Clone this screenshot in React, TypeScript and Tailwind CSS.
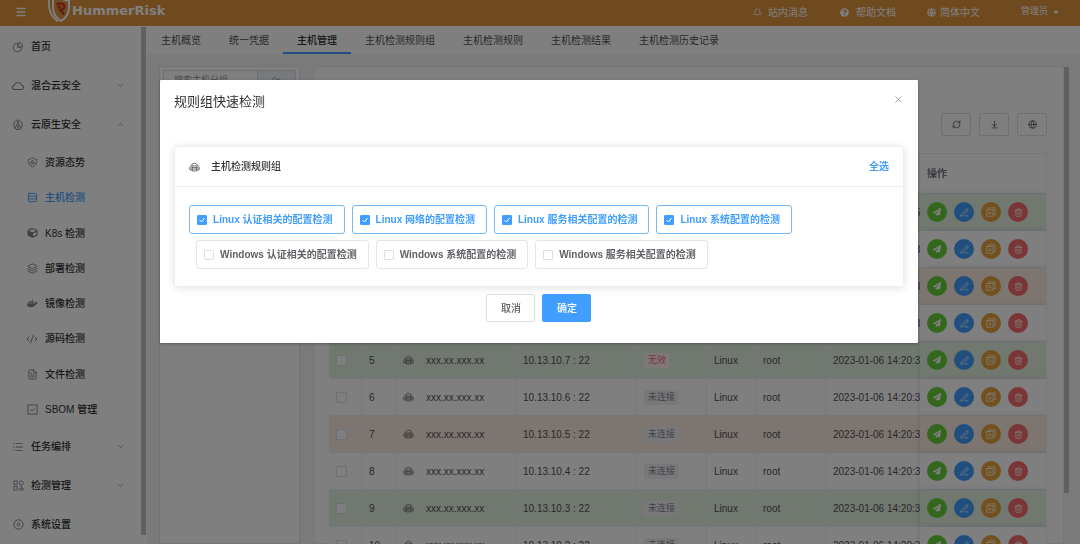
import React from "react";
import { AiOutlinePieChart, AiOutlineCloud, AiOutlineUnorderedList } from "react-icons/ai";
import {
  ChevronDown, ChevronUp, Rows3, Layers, CodeXml, FileText, Menu, Bell,
  Globe, X, ArrowDownToLine, RefreshCw, Trash2, PenLine, Folder,
} from "lucide-react";
import { FaDocker, FaPaperPlane, FaCube, FaGlobe, FaQuestionCircle } from "react-icons/fa";

type MenuItem = { label: string; icon: React.ReactNode; arrow?: "up" | "down"; children?: MenuItem[]; active?: boolean };

const small = "h-[11px] w-[11px]";

const menu: MenuItem[] = [
  { label: "首页", icon: <AiOutlinePieChart className="h-3 w-3" /> },
  { label: "混合云安全", icon: <AiOutlineCloud className="h-[14px] w-[14px] shrink-0" />, arrow: "down" },
  {
    label: "云原生安全",
    icon: <NativeIcon />,
    arrow: "up",
    children: [
      { label: "资源态势", icon: <ShieldIcon /> },
      { label: "主机检测", icon: <Rows3 className={small} strokeWidth={2} />, active: true },
      { label: "K8s 检测", icon: <FaCube className="h-[10px] w-[11px]" /> },
      { label: "部署检测", icon: <Layers className={small} strokeWidth={2} /> },
      { label: "镜像检测", icon: <FaDocker className={small} /> },
      { label: "源码检测", icon: <CodeXml className="h-3 w-3" strokeWidth={2} /> },
      { label: "文件检测", icon: <FileText className={small} strokeWidth={2} /> },
      { label: "SBOM 管理", icon: <CheckSquareIcon /> },
    ],
  },
  { label: "任务编排", icon: <AiOutlineUnorderedList className="h-3 w-3" />, arrow: "down" },
  { label: "检测管理", icon: <GridIcon />, arrow: "down" },
  { label: "系统设置", icon: <GearIcon /> },
];

const tabs = ["主机概览", "统一凭据", "主机管理", "主机检测规则组", "主机检测规则", "主机检测结果", "主机检测历史记录"];

const rowTones = ["bg-[#e3f1de]", "bg-white", "bg-[#faeadf]", "bg-white"];

const hosts = Array.from({ length: 10 }, (_, i) => ({
  index: i + 1,
  name: "xxx.xx.xxx.xx",
  address: `10.13.10.${i === 9 ? 2 : 12 - (i + 1)} : 22`,
  valid: i !== 4,
  time: i === 0 ? "2023-01-06 14:20:56" : "2023-01-06 14:20:36",
  tone: rowTones[i % 4],
}));

const groups = [
  { label: "Linux 认证相关的配置检测", checked: true },
  { label: "Linux 网络的配置检测", checked: true },
  { label: "Linux 服务相关配置的检测", checked: true },
  { label: "Linux 系统配置的检测", checked: true },
  { label: "Windows 认证相关的配置检测", checked: false },
  { label: "Windows 系统配置的检测", checked: false },
  { label: "Windows 服务相关配置的检测", checked: false },
];

function NativeIcon() {
  return (
    <svg viewBox="0 0 24 24" className="h-3 w-3" fill="none" stroke="currentColor" strokeWidth="1.8">
      <path d="M9 3.500L4 6.500v11l4 2.500M15 3.500l5 3v11l-4 2.500" />
      <circle cx="12" cy="3.500" r="2" />
      <path d="M12 6.500L6.500 18M12 6.500L17.500 18M9 14h6M12 14v8M8 21h8" />
    </svg>
  );
}

function ShieldIcon() {
  return (
    <svg viewBox="0 0 24 24" className={small} fill="none" stroke="currentColor" strokeWidth="1.8">
      <path d="M12 2c3 2 6 3 9.500 3 0 8-2.500 14-9.500 17C5 19 2.500 13 2.500 5 6 5 9 4 12 2z" />
      <path d="M6 14l6-7 6 7M9 12.500h6M8 17l4-3 4 3" />
    </svg>
  );
}

function CheckSquareIcon() {
  return (
    <svg viewBox="0 0 24 24" className={small} fill="none" stroke="currentColor" strokeWidth="2">
      <rect x="2" y="2" width="20" height="20" />
      <path d="M7 12l4 3 6-6" />
    </svg>
  );
}

function GridIcon() {
  return (
    <svg viewBox="0 0 24 24" className={small} fill="none" stroke="currentColor" strokeWidth="1.8">
      <rect x="2" y="2" width="7" height="8" />
      <rect x="2" y="14" width="7" height="8" />
      <path d="M14 22v-4h8v4z" />
      <circle cx="18" cy="6.500" r="4.500" />
      <path d="M18 11v7" />
    </svg>
  );
}

function GearIcon() {
  return (
    <svg viewBox="0 0 24 24" className={small} fill="none" stroke="currentColor" strokeWidth="2">
      <path d="M9 2h6l5 3.500 2.500 6.500-2.500 6.500L15 22H9l-5-3.500L1.500 12 4 5.500z" />
      <circle cx="12" cy="12" r="3" />
    </svg>
  );
}

function CopyIcon() {
  return (
    <svg viewBox="0 0 24 24" className="h-[10px] w-[10px]" fill="none" stroke="currentColor" strokeWidth="1.8">
      <rect x="2" y="6" width="15" height="16" />
      <path d="M6 6V2h16v16h-5M6 12h7M6 16h7" />
    </svg>
  );
}

function HostIcon() {
  return (
    <svg viewBox="0 0 24 20" className="h-[10px] w-[11px] shrink-0" fill="none" stroke="currentColor" strokeWidth="1.500">
      <path d="M5 17.500C2.500 17 1 15.500 1 13c0-2.500 1.500-4 3.500-4.500C5 4.500 8 2 12 2s7 2.500 7.500 6.500C21.500 9 23 10.500 23 13c0 2.500-1.500 4-4 4.500" />
      <path d="M7 7.500h10v11H7zM7 11h10M7 14.500h10M5 10.500c-1 2-.5 4 0 6M19 10.500c1 2 .5 4 0 6" />
    </svg>
  );
}

function Logo() {
  return (
    <svg viewBox="0 0 24 26" className="h-[26px] w-6 shrink-0" fill="none">
      <path d="M5 0v8c0 7 3 11 8 14 5-3 8-7 8-14V1.500c-3 0-5-.5-8-2.500" stroke="#fff" strokeWidth="2" />
      <path d="M1 1c-.5 9 1 16 9 21.500" stroke="#fff" strokeWidth="1.800" />
      <path d="M8.500 5.500C10 4 16.500 3.800 16.500 7.200c0 2.300-2 3.300-4.500 3.300L16 15.500M9.500 8.500c1.500-1 2.500-1 3.500-.5" stroke="#c8322a" strokeWidth="2.200" />
    </svg>
  );
}

function MenuRow({ item, child }: { item: MenuItem; child?: boolean }) {
  return (
    <a
      href="#"
      className={`flex shrink-0 items-center text-[10px] font-medium ${child ? "h-[35px] pl-[26px]" : "h-[39px] pl-3"} ${
        item.active ? "text-[#409eff]" : "text-[#303133]"
      }`}
    >
      <span className={`flex w-3 justify-center ${item.active ? "" : "text-[#808388]"}`}>{item.icon}</span>
      <span className="ml-[7px]">{item.label}</span>
      {item.arrow && (
        <span className="mr-4 ml-auto text-[#909399]">
          {item.arrow === "up" ? <ChevronUp className="h-[9px] w-[9px]" /> : <ChevronDown className="h-[9px] w-[9px]" />}
        </span>
      )}
    </a>
  );
}

function Sidebar() {
  return (
    <aside className="flex w-[147px] shrink-0 overflow-hidden bg-white">
      <nav className="flex-1 pt-px">
        {menu.map((item) => (
          <React.Fragment key={item.label}>
            <MenuRow item={item} />
            {item.children && (
              <div className="flex h-[283px] flex-col justify-between pt-px">
                {item.children.map((c) => (
                  <MenuRow key={c.label} item={c} child />
                ))}
              </div>
            )}
          </React.Fragment>
        ))}
      </nav>
      <div className="mt-px mr-px mb-[9px] w-[5px] bg-[#c0c0c0]" />
    </aside>
  );
}

function Header() {
  return (
    <header className="flex h-[26px] shrink-0 items-center bg-[#e0943f] pb-[2px] pl-[15px] text-[10px] text-white">
      <button type="button" aria-label="折叠菜单" className="mr-[21px] flex">
        <Menu className="h-3 w-3" strokeWidth={3} />
      </button>
      <Logo />
      <span className="-mt-[3px] font-['DejaVu_Sans',sans-serif] text-[13px] font-bold">HummerRisk</span>
      <nav className="ml-auto flex items-center pr-[21px]">
        <a href="#" className="mr-8 flex items-center gap-[6px]"><Bell className="h-[9px] w-[9px]" />站内消息</a>
        <a href="#" className="mr-[31px] flex items-center gap-[7px]"><FaQuestionCircle className="h-[9px] w-[9px]" />帮助文档</a>
        <a href="#" className="mr-[41px] flex items-center gap-1"><FaGlobe className="h-[9px] w-[9px]" />简体中文</a>
        <button type="button" className="flex items-center gap-[5px] text-[9px]">
          管理员
          <span className="border-x-[3px] border-t-[3px] border-x-transparent border-t-white" />
        </button>
      </nav>
    </header>
  );
}

function Tabs() {
  return (
    <nav className="flex h-[28px] shrink-0 bg-white text-[10px]">
      {tabs.map((t) => (
        <a
          key={t}
          href="#"
          className={`flex items-center border-b-2 px-[14px] pt-[2px] ${
            t === "主机管理" ? "border-[#409eff] font-medium text-[#303133]" : "border-transparent text-[#505256]"
          }`}
        >
          {t}
        </a>
      ))}
    </nav>
  );
}

const actions = [
  { label: "检测", tone: "bg-[#67cf3a]", icon: <FaPaperPlane className="h-2 w-2" /> },
  { label: "编辑", tone: "bg-[#409eff]", icon: <PenLine className="h-[9px] w-[9px]" /> },
  { label: "复制", tone: "bg-[#e6a23c]", icon: <CopyIcon /> },
  { label: "删除", tone: "bg-[#f56c6c]", icon: <Trash2 className="h-[9px] w-[9px]" /> },
];

const cell = "border-r border-b border-[#ebeef5] px-[7px] text-left";

function HostTable() {
  return (
    <div className="overflow-hidden border-t border-[#ebeef5]">
      <table className="w-full min-w-[760px] table-fixed border-separate border-spacing-0 text-[10px] text-[#505256]">
        <colgroup>
          <col className="w-[33px]" />
          <col className="w-[34px]" />
          <col className="w-[120px]" />
          <col className="w-[121px]" />
          <col className="w-[70px]" />
          <col className="w-[49px]" />
          <col className="w-[70px]" />
          <col />
          <col className="w-[127px]" />
        </colgroup>
        <thead>
          <tr className="h-10">
            <th className={cell}><input type="checkbox" aria-label="全部主机" className="block h-[11px] w-[11px] appearance-none rounded-[1px] border border-[#dcdfe6]" /></th>
            <th className={cell}>#</th>
            <th className={cell}>名称</th>
            <th className={cell}>地址</th>
            <th className={cell}>状态</th>
            <th className={cell}>系统</th>
            <th className={cell}>用户</th>
            <th className={cell}>时间</th>
            <th className={`${cell} sticky right-0 bg-white text-[#70747c] shadow-[0_0_6px_rgba(0,0,0,0.12)]`}>操作</th>
          </tr>
        </thead>
        <tbody>
          {hosts.map((h) => (
            <tr key={h.index} className={`h-[37px] ${h.tone}`}>
              <td className={cell}><input type="checkbox" aria-label={`选择主机 ${h.index}`} className="block h-[11px] w-[11px] appearance-none rounded-[1px] border border-[#dcdfe6] bg-white" /></td>
              <td className={cell}>{h.index}</td>
              <td className={cell}><span className="flex items-center gap-3"><HostIcon />{h.name}</span></td>
              <td className={cell}>{h.address}</td>
              <td className={`${cell} whitespace-nowrap`}>
                <span className={`inline-block rounded-[2px] px-1 text-[9px] leading-[15px] ${h.valid ? "bg-[#f1f1f4] text-[#80848c]" : "bg-[#fdeeee] text-[#f56c6c]"}`}>
                  {h.valid ? "未连接" : "无效"}
                </span>
              </td>
              <td className={cell}>Linux</td>
              <td className={cell}>root</td>
              <td className={`${cell} whitespace-nowrap`}>{h.time}</td>
              <td className={`${cell} sticky right-0 shadow-[0_0_6px_rgba(0,0,0,0.12)] ${h.tone}`}>
                <span className="flex gap-[7px]">
                  {actions.map((a) => (
                    <button key={a.label} type="button" aria-label={a.label} className={`flex h-5 w-5 shrink-0 items-center justify-center rounded-full text-white ${a.tone}`}>
                      {a.icon}
                    </button>
                  ))}
                </span>
              </td>
            </tr>
          ))}
        </tbody>
      </table>
    </div>
  );
}

function Dialog() {
  return (
    <div className="absolute inset-0 flex items-start justify-center bg-black/50 pt-20 pr-[2px]">
      <section role="dialog" aria-label="规则组快速检测" className="w-[70.3%] rounded-[1px] bg-white px-[14px] pb-[21px] shadow-[0_1px_3px_rgba(0,0,0,0.3)]">
        <div className="flex h-[66px] items-start justify-between pt-[13px]">
          <h2 className="text-[13px] leading-[18px] text-[#303133]">规则组快速检测</h2>
          <button type="button" aria-label="关闭" className="mt-px text-[#909399]"><X className="h-[11px] w-[11px]" strokeWidth={1.8} /></button>
        </div>
        <div className="rounded-[3px] border border-[#ebeef5] shadow-[0_1px_8px_rgba(0,0,0,0.12)]">
          <div className="flex h-10 items-center border-b border-[#ebeef5] px-[14px] text-[10px] text-[#303133]">
            <HostIcon />
            <span className="ml-[11px] font-medium">主机检测规则组</span>
            <button type="button" className="ml-auto font-bold text-[#409eff]">全选</button>
          </div>
          <div className="flex flex-wrap gap-y-[6px] pt-[18px] pr-[7px] pb-[17px] pl-[14px]">
            {groups.map((g) => (
              <label
                key={g.label}
                className={`ml-[7px] flex h-[29px] items-center rounded-[3px] border pr-[11px] pl-[7px] text-[10px] font-bold first:ml-0 ${
                  g.checked ? "border-[#76b9f5] text-[#409eff]" : "border-[#e2e5ea] text-[#606266]"
                }`}
              >
                <span className="relative mr-[6px] h-[10px] w-[10px]">
                  <input
                    type="checkbox"
                    defaultChecked={g.checked}
                    className="block h-[10px] w-[10px] appearance-none rounded-[1px] border border-[#dcdfe6] bg-white checked:border-[#409eff] checked:bg-[#409eff]"
                  />
                  {g.checked && (
                    <svg viewBox="0 0 10 10" className="pointer-events-none absolute inset-0" fill="none" stroke="#fff"><path d="M2.500 5l2 2 3-4" /></svg>
                  )}
                </span>
                {g.label}
              </label>
            ))}
          </div>
        </div>
        <div className="mt-[7px] flex justify-center gap-[7px] text-[10px] font-medium">
          <button type="button" className="h-7 w-[49px] rounded-[2px] border border-[#dcdfe6] text-[#606266]">取消</button>
          <button type="button" className="h-7 w-[49px] rounded-[2px] bg-[#409eff] text-white">确定</button>
        </div>
      </section>
    </div>
  );
}

export default function App() {
  return (
    <div className="relative flex h-screen flex-col overflow-hidden font-['Liberation_Sans','Noto_Sans_CJK_SC',sans-serif]">
      <Header />
      <div className="flex min-h-0 flex-1">
        <Sidebar />
        <main className="flex min-w-0 flex-1 flex-col bg-[#f5f5f5]">
          <Tabs />
          <div className="flex min-h-0 flex-1 gap-[14px] pt-3 pr-[11px] pl-3">
            <aside className="w-[141px] shrink-0 border border-[#e4e7ed] bg-white p-[3px]">
              <div className="flex h-[22px] border border-[#dcdfe6] text-[9px]">
                <input aria-label="搜索主机分组" placeholder="搜索主机分组" className="w-0 flex-1 px-[10px] placeholder:text-[#909399]" />
                <button type="button" aria-label="分组" className="flex w-[38px] items-center justify-center border-l border-[#dcdfe6] bg-[#f0f3fa] text-[#808388]"><Folder className="h-[9px] w-[9px]" /></button>
              </div>
            </aside>
            <div className="flex min-w-0 flex-1">
              <section className="min-w-0 flex-1 border border-[#eceef2] bg-white pr-[16px] pl-[14px]">
                <div className="flex justify-end gap-2 pt-[46px] pb-[17px] text-[#505256]">
                  {[
                    { label: "刷新", icon: <RefreshCw className="h-[9px] w-[9px]" /> },
                    { label: "下载", icon: <ArrowDownToLine className="h-[9px] w-[9px]" /> },
                    { label: "列设置", icon: <Globe className="h-[9px] w-[9px]" /> },
                  ].map((b) => (
                    <button key={b.label} type="button" aria-label={b.label} className="flex h-[23px] w-[30px] items-center justify-center rounded-[2px] border border-[#dcdfe6]">
                      {b.icon}
                    </button>
                  ))}
                </div>
                <HostTable />
              </section>
              <div className="mt-px h-[426px] w-[5px] bg-[#c0c0c0]" />
            </div>
          </div>
        </main>
      </div>
      <Dialog />
    </div>
  );
}
